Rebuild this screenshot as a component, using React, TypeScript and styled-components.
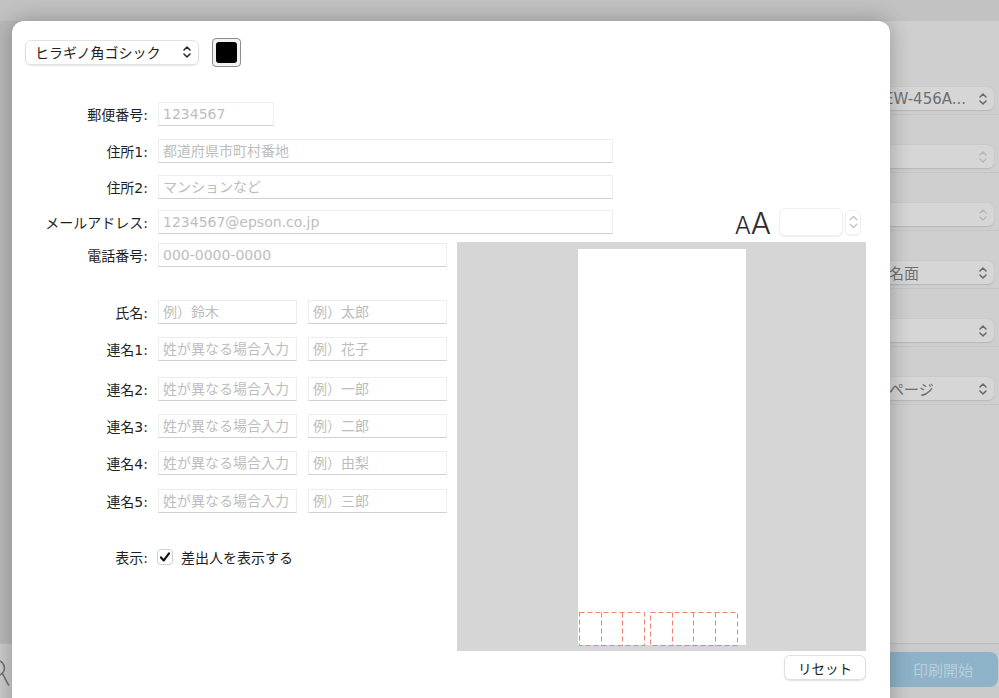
import React from "react";
import styled, { createGlobalStyle } from "styled-components";

const FONT = `"DejaVu Sans", "Noto Sans CJK JP", sans-serif`;

const Global = createGlobalStyle`
  html, body { margin: 0; padding: 0; width: 999px; height: 698px; overflow: hidden; }
  body { font-family: ${FONT}; background: #c8c8c8; -webkit-font-smoothing: antialiased; }
  #root { width: 999px; height: 698px; }
  * { box-sizing: border-box; }
`;

/* ---------- backdrop window ---------- */
const Desktop = styled.div`
  position: relative;
  width: 999px;
  height: 698px;
  display: flex;
  flex-direction: column;
  overflow: hidden;
`;
const TitleBar = styled.div`
  height: 21px;
  flex: none;
  background: #c2c2c2;
`;
const WindowBody = styled.div`
  flex: 1;
  display: flex;
  min-height: 0;
`;
const MainPane = styled.div`
  flex: 1;
  background: #b9b9b9;
`;
const Sidebar = styled.div`
  width: 300px;
  background: #cfcfcf;
  padding-top: 36px;
  display: flex;
  flex-direction: column;
`;
const SideRow = styled.div`
  padding: 30px 5px 4px 0;
  border-bottom: 1px solid #c5c5c5;
  display: flex;
  justify-content: flex-end;
`;
const SidePopup = styled.div<{ $indent?: number }>`
  width: 132px;
  height: 23px;
  border-radius: 6px;
  background: #d6d6d6;
  box-shadow: 0 0.5px 1.5px rgba(0, 0, 0, 0.12);
  display: flex;
  align-items: center;
  padding: 0 6px 0 ${(p) => 12 + (p.$indent || 0)}px;
  font-size: 15px;
  color: #6f6f6f;
  white-space: nowrap;
`;
const SideText = styled.span`
  flex: 1;
  overflow: hidden;
`;
const BottomBar = styled.div`
  height: 55px;
  flex: none;
  border-top: 1px solid #bcbcbc;
  background: #cbcbcb;
  display: flex;
  justify-content: space-between;
  align-items: flex-start;
`;
const PrintButton = styled.div`
  margin: 8px 1px 0 0;
  width: 128px;
  flex: none;
  height: 35px;
  border-radius: 8px;
  background: #8eb2c7;
  color: #b7cfdc;
  font-size: 15px;
  display: flex;
  align-items: center;
  justify-content: flex-end;
  padding-right: 25px;
`;

/* ---------- sheet ---------- */
const Sheet = styled.div`
  position: absolute;
  left: 12px;
  top: 21px;
  width: 878px;
  height: 720px;
  background: #ffffff;
  border-radius: 12px 12px 0 0;
  box-shadow: 0 0 22px rgba(0, 0, 0, 0.28);
  padding: 17px 24px 0 13px;
  display: flex;
  flex-direction: column;
  color: #242424;
`;
const Toolbar = styled.div`
  height: 28px;
  display: flex;
  align-items: center;
  gap: 13px;
`;
const FontPopup = styled.div`
  width: 174px;
  height: 25px;
  border-radius: 6px;
  border: 1px solid #e2e2e2;
  box-shadow: 0 1px 1.5px rgba(0, 0, 0, 0.1);
  display: flex;
  align-items: center;
  justify-content: space-between;
  padding: 0 6px 0 9px;
  font-size: 14px;
  color: #222;
`;
const ColorWell = styled.div`
  width: 29px;
  height: 29px;
  border: 1px solid #8c8c8c;
  border-radius: 4px;
  background: #f2f2f2;
  display: flex;
  align-items: center;
  justify-content: center;
`;
const Swatch = styled.div`
  width: 21px;
  height: 21px;
  border-radius: 3px;
  background: #000;
`;
const Row = styled.div<{ $mt: number }>`
  height: 24px;
  margin-top: ${(p) => p.$mt}px;
  display: flex;
  align-items: center;
  flex: none;
`;
const Label = styled.div`
  width: 123px;
  margin-right: 10px;
  text-align: right;
  font-size: 14px;
  color: #1f1f1f;
  white-space: nowrap;
  flex: none;
`;
const Field = styled.input<{ $w: number }>`
  width: ${(p) => p.$w}px;
  height: 24px;
  flex: none;
  border: 1px solid #ededed;
  border-bottom-color: #d0d0d0;
  border-radius: 0;
  background: #fff;
  padding: 0 4px;
  font-family: ${FONT};
  font-size: 14px;
  color: #222;
  outline: none;
  &::placeholder {
    color: #bdbdbd;
  }
`;
const FieldPair = styled.div`
  display: flex;
  gap: 11px;
`;
const SizeGroup = styled.div`
  margin-left: auto;
  margin-right: 5px;
  display: flex;
  align-items: center;
`;
const AAText = styled.div`
  display: flex;
  align-items: baseline;
  font-family: "Inter", "Liberation Sans", sans-serif;
  font-weight: 300;
  color: #2c2c2c;
  margin-right: 8px;
  line-height: 1;
  padding-top: 2px;
`;
const SmallA = styled.span`
  font-size: 24px;
`;
const BigA = styled.span`
  font-size: 30px;
`;
const SizeField = styled.div`
  width: 64px;
  height: 28px;
  border-radius: 6px;
  border: 1px solid #f0f0f0;
  box-shadow: 0 1px 1.5px rgba(0, 0, 0, 0.08);
  background: #fff;
`;
const Stepper = styled.div`
  margin-left: 2px;
  width: 16px;
  height: 25px;
  border-radius: 5px;
  border: 1px solid #f0f0f0;
  box-shadow: 0 1px 1px rgba(0, 0, 0, 0.06);
  display: flex;
  align-items: center;
  justify-content: center;
`;
const Lower = styled.div`
  margin-top: 8px;
  display: flex;
  gap: 11px;
`;
const LeftCol = styled.div`
  width: 421px;
  display: flex;
  flex-direction: column;
`;
const RightCol = styled.div`
  display: flex;
  flex-direction: column;
  align-items: flex-end;
`;
const CheckBox = styled.div`
  width: 16px;
  height: 16px;
  border-radius: 4px;
  border: 1px solid #d0d0d0;
  background: #fff;
  display: flex;
  align-items: center;
  justify-content: center;
  margin: 0 8px 0 -1px;
`;
const CheckText = styled.span`
  font-size: 14px;
  color: #222;
`;
const Preview = styled.div`
  width: 409px;
  height: 409px;
  background: #d6d6d6;
  display: flex;
  justify-content: center;
  padding-top: 7px;
`;
const Paper = styled.div`
  width: 168px;
  height: 396px;
  background: #fff;
  display: flex;
  flex-direction: column;
  justify-content: flex-end;
  padding: 0 0 0 1px;
`;
const StampRow = styled.div`
  display: flex;
  gap: 5px;
  margin-bottom: -1px;
`;
const StampBox = styled.svg`
  display: block;
  flex: none;
`;

const Updown = ({ color = "#333", w = 10, h = 14, sw = 1.6 }: { color?: string; w?: number; h?: number; sw?: number }) => (
  <svg width={w} height={h} viewBox="0 0 10 14" fill="none">
    <path d="M2 5 L5 2 L8 5 M2 9 L5 12 L8 9" stroke={color} strokeWidth={sw} strokeLinecap="round" strokeLinejoin="round" />
  </svg>
);

const Stamps = ({ count }: { count: number }) => {
  const bw = 21.7;
  const w = Math.round(bw * count) + 1;
  const h = 34;
  const lines = [];
  for (let i = 1; i < count; i++) {
    const x = Math.round(bw * i) + 0.5;
    lines.push(<line key={i} x1={x} y1={0.5} x2={x} y2={h - 0.5} />);
  }
  return (
    <StampBox width={w} height={h} viewBox={`0 0 ${w} ${h}`} fill="none" stroke="#f0806f" strokeWidth={1} strokeDasharray="5 3">
      <rect x={0.5} y={0.5} width={w - 1} height={h - 1} />
      {lines}
    </StampBox>
  );
};

const ResetButton = styled.div`
  margin-top: 4px;
  width: 82px;
  height: 25px;
  border-radius: 6px;
  border: 1px solid #e0e0e0;
  box-shadow: 0 1px 1.5px rgba(0, 0, 0, 0.12);
  background: #fff;
  display: flex;
  align-items: center;
  justify-content: center;
  font-size: 13.5px;
  color: #222;
`;

const Magnifier = () => (
  <svg width="14" height="45" viewBox="0 0 14 45" fill="none">
    <circle cx="-3" cy="24" r="7.5" stroke="#6d6d6d" strokeWidth="1.5" />
    <path d="M2.5 29.5 L8.5 41" stroke="#6d6d6d" strokeWidth="1.6" strokeLinecap="round" />
  </svg>
);

const sideRows: { text: string; indent?: number; dim?: boolean }[] = [
  { text: "EW-456A...", indent: 10 },
  { text: "", dim: true },
  { text: "", dim: true },
  { text: "宛名面" },
  { text: "" },
  { text: "全ページ" },
];

const nameRows: { label: string; first: string; last: string; mt: number }[] = [
  { label: "氏名:", first: "例）鈴木", last: "例）太郎", mt: 33 },
  { label: "連名1:", first: "姓が異なる場合入力", last: "例）花子", mt: 13 },
  { label: "連名2:", first: "姓が異なる場合入力", last: "例）一郎", mt: 16 },
  { label: "連名3:", first: "姓が異なる場合入力", last: "例）二郎", mt: 13 },
  { label: "連名4:", first: "姓が異なる場合入力", last: "例）由梨", mt: 13 },
  { label: "連名5:", first: "姓が異なる場合入力", last: "例）三郎", mt: 14 },
];

export default function App() {
  return (
    <>
      <Global />
      <Desktop>
        <TitleBar />
        <WindowBody>
          <MainPane />
          <Sidebar>
            {sideRows.map((r, i) => (
              <SideRow key={i}>
                <SidePopup $indent={r.indent}>
                  <SideText>{r.text}</SideText>
                  <Updown color={r.dim ? "#b8b8b8" : "#6a6a6a"} />
                </SidePopup>
              </SideRow>
            ))}
          </Sidebar>
        </WindowBody>
        <BottomBar>
          <Magnifier />
          <PrintButton>印刷開始</PrintButton>
        </BottomBar>

        <Sheet>
          <Toolbar>
            <FontPopup>
              <span>ヒラギノ角ゴシック</span>
              <Updown color="#2a2a2a" />
            </FontPopup>
            <ColorWell>
              <Swatch />
            </ColorWell>
          </Toolbar>

          <Row $mt={36}>
            <Label>郵便番号:</Label>
            <Field $w={116} placeholder="1234567" />
          </Row>
          <Row $mt={13}>
            <Label>住所1:</Label>
            <Field $w={455} placeholder="都道府県市町村番地" />
          </Row>
          <Row $mt={12}>
            <Label>住所2:</Label>
            <Field $w={455} placeholder="マンションなど" />
          </Row>
          <Row $mt={11}>
            <Label>メールアドレス:</Label>
            <Field $w={455} placeholder="1234567@epson.co.jp" />
            <SizeGroup>
              <AAText>
                <SmallA>A</SmallA>
                <BigA>A</BigA>
              </AAText>
              <SizeField />
              <Stepper>
                <Updown color="#c4c4c4" w={11} h={20} sw={1.3} />
              </Stepper>
            </SizeGroup>
          </Row>

          <Lower>
            <LeftCol>
              <Row $mt={1}>
                <Label>電話番号:</Label>
                <Field $w={289} placeholder="000-0000-0000" />
              </Row>
              {nameRows.map((r) => (
                <Row key={r.label} $mt={r.mt}>
                  <Label>{r.label}</Label>
                  <FieldPair>
                    <Field $w={139} placeholder={r.first} />
                    <Field $w={139} placeholder={r.last} />
                  </FieldPair>
                </Row>
              ))}
              <Row $mt={32}>
                <Label>表示:</Label>
                <CheckBox>
                  <svg width="12" height="12" viewBox="0 0 12 12" fill="none">
                    <path d="M2 6.4 L4.8 9.4 L10 2.4" stroke="#111" strokeWidth="2.2" strokeLinecap="round" strokeLinejoin="round" />
                  </svg>
                </CheckBox>
                <CheckText>差出人を表示する</CheckText>
              </Row>
            </LeftCol>

            <RightCol>
              <Preview>
                <Paper>
                  <StampRow>
                    <Stamps count={3} />
                    <Stamps count={4} />
                  </StampRow>
                </Paper>
              </Preview>
              <ResetButton>リセット</ResetButton>
            </RightCol>
          </Lower>
        </Sheet>
      </Desktop>
    </>
  );
}
